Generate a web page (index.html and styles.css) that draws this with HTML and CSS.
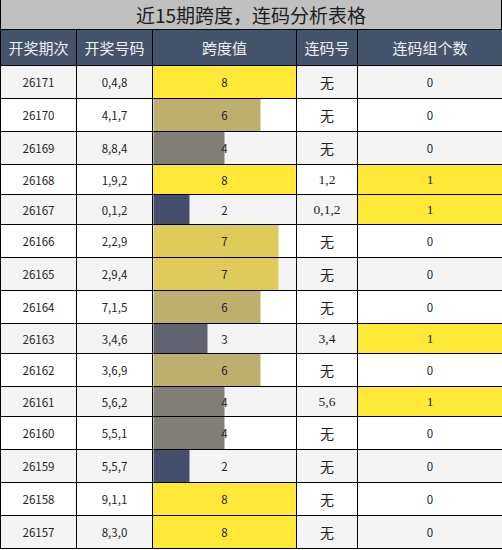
FILE: index.html
```html
<!DOCTYPE html>
<html lang="zh-CN">
  <head>
    <meta charset="UTF-8" />
    <meta name="viewport" content="width=device-width, initial-scale=1.0" />
    <title>近15期跨度，连码分析表格</title>
    <link rel="stylesheet" href="styles.css">
  </head>
  <body>
    <div class="title">近15期跨度，连码分析表格</div>
    <table class="stats">
      <colgroup>
        <col class="c-issue" />
        <col class="c-nums" />
        <col class="c-span" />
        <col class="c-link" />
        <col class="c-count" />
      </colgroup>
      <thead>
        <tr>
          <th>开奖期次</th>
          <th>开奖号码</th>
          <th>跨度值</th>
          <th>连码号</th>
          <th>连码组个数</th>
        </tr>
      </thead>
      <tbody id="rows"></tbody>
    </table>
    <script>
      // issue, numbers, span, linked numbers, linked group count
      const data = [
        ["26171", "0,4,8", 8, "", 0],
        ["26170", "4,1,7", 6, "", 0],
        ["26169", "8,8,4", 4, "", 0],
        ["26168", "1,9,2", 8, "1,2", 1],
        ["26167", "0,1,2", 2, "0,1,2", 1],
        ["26166", "2,2,9", 7, "", 0],
        ["26165", "2,9,4", 7, "", 0],
        ["26164", "7,1,5", 6, "", 0],
        ["26163", "3,4,6", 3, "3,4", 1],
        ["26162", "3,6,9", 6, "", 0],
        ["26161", "5,6,2", 4, "5,6", 1],
        ["26160", "5,5,1", 4, "", 0],
        ["26159", "5,5,7", 2, "", 0],
        ["26158", "9,1,1", 8, "", 0],
        ["26157", "8,3,0", 8, "", 0]
      ];

      // bar colour for each span value
      const barColors = {
        2: "#454f6c",
        3: "#616270",
        4: "#807e77",
        6: "#bdb06f",
        7: "#dfcb5b",
        8: "#ffe838"
      };

      const tbody = document.getElementById("rows");
      data.forEach(([issue, nums, span, link, count]) => {
        const tr = document.createElement("tr");
        const pct = (span / 8) * 100;
        const color = barColors[span];
        const linkCell = link
          ? `<td class="link">${link}</td>`
          : `<td><span class="none">无</span></td>`;
        tr.innerHTML = `
          <td>${issue}</td>
          <td>${nums}</td>
          <td class="span" style="background: linear-gradient(to right, ${color} ${pct}%, transparent ${pct}%)">${span}</td>
          ${linkCell}
          <td class="count${count ? " hit" : ""}">${count}</td>`;
        tbody.appendChild(tr);
      });
    </script>
  </body>
</html>
```

FILE: styles.css
```css
body {
  margin: 0;
  font-family: "Noto Sans CJK SC", "Noto Sans", sans-serif;
  color: #222;
}

.title {
  height: 29px;
  line-height: 29px;
  background-color: #c0c0c0;
  border-left: 1px solid #000;
  border-right: 1px solid #000;
  text-align: center;
  font-size: 19px;
  color: #1e1e1e;
}

.stats {
  width: 502px;
  border-collapse: collapse;
  table-layout: fixed;
  border: 1px solid #000;
}

.c-issue { width: 76px; }
.c-nums { width: 76px; }
.c-span { width: 144px; }
.c-link { width: 61px; }
.c-count { width: 145px; }

.stats th {
  height: 35px;
  padding: 0;
  background-color: #44546a;
  color: #eef0f2;
  font-size: 15px;
  font-weight: normal;
  border: 1px solid #000;
}

.stats td {
  height: 29px;
  padding: 0;
  border: 1px solid #000;
  text-align: center;
  font-size: 11.5px;
  color: #262626;
}

.stats tbody tr:nth-child(odd) {
  background-color: #f4f4f4;
}

.stats tbody tr:nth-child(even) {
  background-color: #fff;
}

.none {
  display: inline-block;
  line-height: 32px;
  font-size: 14px;
  color: #222;
}

.link {
  font-family: "Liberation Serif", serif;
}

.stats td.link {
  font-size: 13.5px;
  color: #1e1e1e;
}

.stats td.count.hit {
  background-color: #ffe838;
  font-family: "Liberation Serif", serif;
  font-size: 13.5px;
  color: #1e1e1e;
}
```
